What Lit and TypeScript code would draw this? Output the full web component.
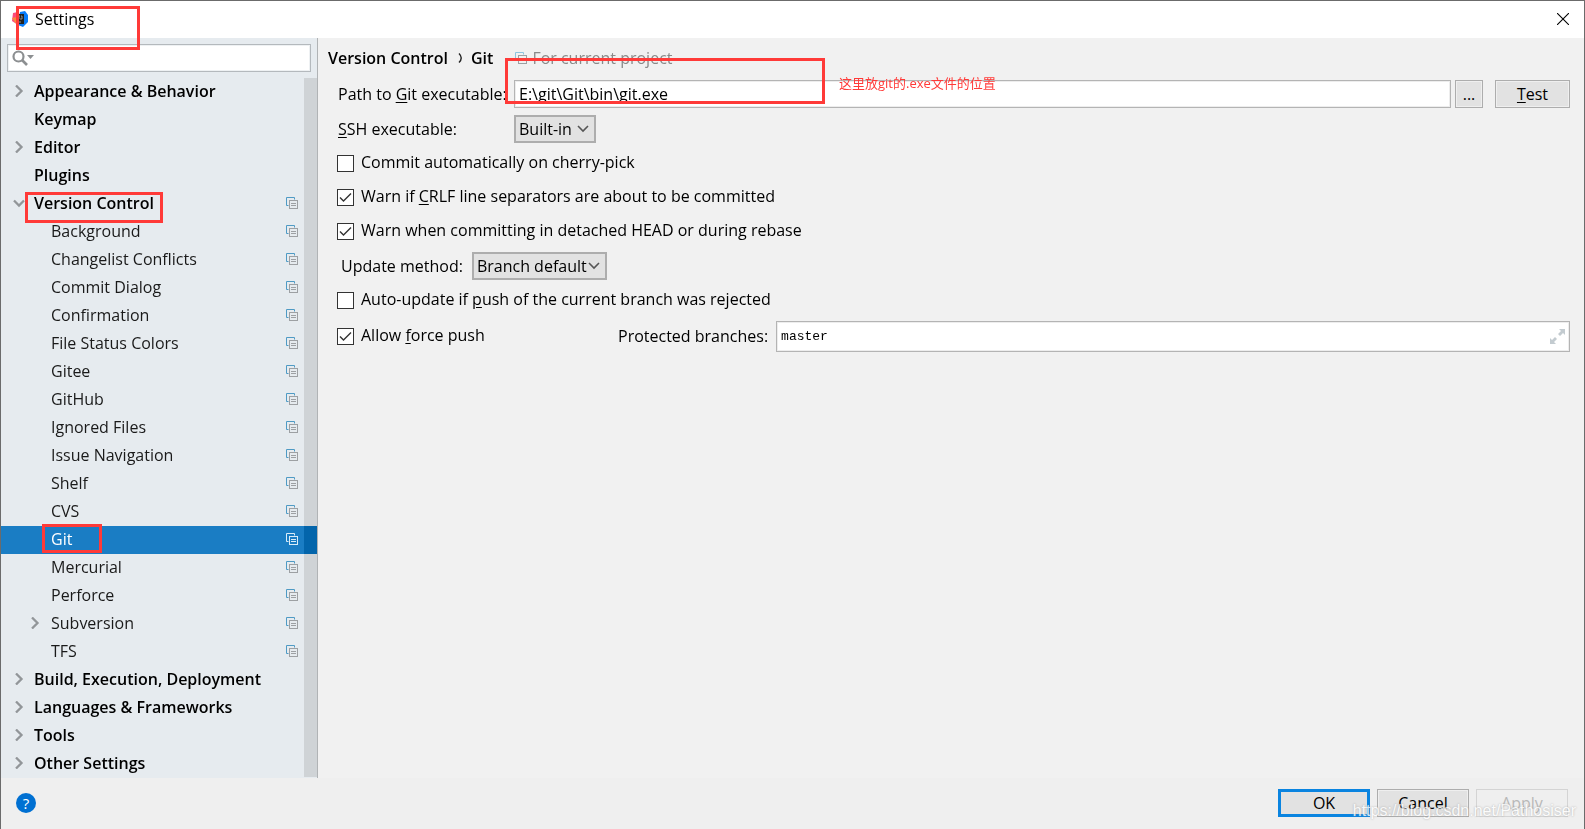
import { LitElement, html, css, nothing } from "lit";
import { customElement, property, state } from "lit/decorators.js";
import { classMap } from "lit/directives/class-map.js";

interface TreeItem {
  label: string;
  level: 0 | 1;
  arrow?: "closed" | "open";
  project?: boolean;
  marked?: boolean;
}

const ITEMS: TreeItem[] = [
  { label: "Appearance & Behavior", level: 0, arrow: "closed" },
  { label: "Keymap", level: 0 },
  { label: "Editor", level: 0, arrow: "closed" },
  { label: "Plugins", level: 0 },
  { label: "Version Control", level: 0, arrow: "open", project: true, marked: true },
  ...[
    "Background", "Changelist Conflicts", "Commit Dialog", "Confirmation",
    "File Status Colors", "Gitee", "GitHub", "Ignored Files",
    "Issue Navigation", "Shelf", "CVS",
  ].map((label): TreeItem => ({ label, level: 1, project: true })),
  { label: "Git", level: 1, project: true, marked: true },
  { label: "Mercurial", level: 1, project: true },
  { label: "Perforce", level: 1, project: true },
  { label: "Subversion", level: 1, arrow: "closed", project: true },
  { label: "TFS", level: 1, project: true },
  { label: "Build, Execution, Deployment", level: 0, arrow: "closed" },
  { label: "Languages & Frameworks", level: 0, arrow: "closed" },
  { label: "Tools", level: 0, arrow: "closed" },
  { label: "Other Settings", level: 0, arrow: "closed" },
];

const pagesIcon = html`<svg class="pages" width="12" height="12" viewBox="0 0 12 12" aria-hidden="true">
  <path class="back" d="M2.500 8.500H.5V.5h8v2" fill="none" />
  <rect class="front" x="3.500" y="3.500" width="8" height="8" fill="none" />
  <path class="front" d="M5 6.500h5M5 8.500h5" fill="none" />
</svg>`;

const downIcon = html`<svg class="down" width="12" height="8" viewBox="0 0 12 8" aria-hidden="true">
  <path d="M1 1l5 5 5-5" fill="none" stroke="#555" stroke-width="1.6" />
</svg>`;

const iconStyles = css`
  .pages { display: block; flex: none; }
  .back { stroke: #4f9ac4; }
  .front { stroke: #9da0a3; }
`;

@customElement("settings-tree")
export class SettingsTree extends LitElement {
  @state() private selected = "Git";

  static styles = [iconStyles, css`
    :host { display: block; position: relative; }
    ul { list-style: none; margin: 0; padding: 0; }
    .row {
      box-sizing: border-box;
      display: grid;
      grid-template-columns: 33px 1fr 12px;
      align-items: center;
      width: 100%;
      height: 28px;
      padding: 0 19px 2px 0;
      border: 0;
      background: none;
      color: #1a1a1a;
      font: inherit;
      text-align: left;
    }
    .row.child { grid-template-columns: 50px 1fr 12px; }
    .row.top { font-weight: 600; color: #000; }
    .row.selected { background: #1a7dc4; color: #fff; }
    .row.selected .back, .row.selected .front { stroke: #d9ecf8; }
    .arrow { display: block; justify-self: end; margin-right: 9px; }
    .child .arrow { margin-right: 10px; }
    .name { grid-column: 2; justify-self: start; position: relative; line-height: 26px; }
    .mark {
      position: absolute;
      inset: 2px -9px -7px -9px;
      border: 3px solid #ff3a38;
      pointer-events: none;
      z-index: 1;
    }
    .child .mark { inset: -2px -30px -1px -9px; }
    .scrollbar {
      position: absolute;
      inset: 0 0 1px auto;
      width: 13px;
      background: #171819;
      mix-blend-mode: difference;
    }
  `];

  private renderArrow(kind: TreeItem["arrow"]) {
    if (!kind) return nothing;
    const d = kind === "open" ? "M1 3.5l5 5 5-5" : "M3 .5l5.500 5.500-5.500 5.500";
    return html`<svg class="arrow" width="12" height="12" viewBox="0 0 12 12" aria-hidden="true">
      <path d=${d} fill="none" stroke="#929699" stroke-width="2.3" />
    </svg>`;
  }

  render() {
    return html`
      <ul>
        ${ITEMS.map((item) => html`<li>
          <button
            class=${classMap({
              row: true,
              top: item.level === 0,
              child: item.level === 1,
              selected: item.label === this.selected,
            })}
            @click=${() => (this.selected = item.label)}
          >
            ${this.renderArrow(item.arrow)}
            <span class="name">${item.label}${item.marked ? html`<span class="mark"></span>` : nothing}</span>
            ${item.project ? pagesIcon : nothing}
          </button>
        </li>`)}
      </ul>
      <div class="scrollbar"></div>
    `;
  }
}

@customElement("git-panel")
export class GitPanel extends LitElement {
  static styles = [iconStyles, css`
    :host { display: block; padding: 0 14px 0 10px; }
    .crumbs { box-sizing: border-box; display: flex; align-items: center; height: 42px; padding-bottom: 2px; font-weight: 600; }
    .crumbs svg { flex: none; }
    .sep { margin: 0 8px 0 10px; }
    .scope { display: flex; align-items: center; gap: 5px; margin-left: 22px; color: #8a8a8a; font-weight: 400; }
    .scope .back { stroke: #8cc4e0; }
    .grid {
      display: grid;
      grid-template-columns: 176px 1fr;
      row-gap: 7px;
      padding-left: 10px;
    }
    .grid > label { line-height: 28px; white-space: nowrap; }
    .path { position: relative; display: flex; }
    u { text-decoration-thickness: 1px; text-underline-offset: 2px; }
    input[type="text"] {
      box-sizing: border-box;
      flex: 1;
      min-width: 0;
      height: 28px;
      padding: 0 4px;
      border: 1px solid #b4b4b4;
      border-radius: 0;
      box-shadow: inset 0 0 0 1px #ededed;
      background: #fff;
      color: #000;
      font: inherit;
    }
    button {
      height: 28px;
      padding: 0;
      border: 1px solid #adadad;
      box-shadow: inset 0 0 0 1px #efefef;
      background: #e2e2e2;
      color: #000;
      font: inherit;
    }
    .browse { width: 28px; margin-left: 4px; }
    .test { width: 75px; margin-left: 12px; }
    .select { position: relative; display: inline-flex; }
    select {
      appearance: none;
      box-sizing: border-box;
      height: 28px;
      padding: 0 18px 0 3px;
      border: 2px solid #adadad;
      border-radius: 0;
      background: #e2e2e2;
      color: #000;
      font: inherit;
    }
    .ssh { width: 82px; }
    .method { width: 135px; }
    .down { position: absolute; right: 7px; top: 10px; pointer-events: none; }
    .options { padding: 3px 0 0 9px; }
    .check { display: flex; align-items: center; gap: 7px; height: 34px; }
    .check label { padding-bottom: 2px; white-space: nowrap; }
    input[type="checkbox"] {
      appearance: none;
      box-sizing: border-box;
      flex: none;
      width: 17px;
      height: 17px;
      margin: 0;
      border: 1px solid #333;
      background: #fff;
    }
    input[type="checkbox"]:checked {
      background: #fff url("data:image/svg+xml,%3Csvg xmlns='http://www.w3.org/2000/svg' width='15' height='15'%3E%3Cpath d='M2 7.5l3.5 3.5L13 3.5' fill='none' stroke='%23333' stroke-width='1.4'/%3E%3C/svg%3E");
    }
    .update { display: flex; align-items: center; gap: 9px; height: 35px; padding-left: 4px; }
    .push { display: flex; align-items: center; padding-top: 2px; }
    .push .check { width: 281px; }
    .branches { display: flex; flex: 1; position: relative; margin-left: 8px; }
    .branches input[type="text"] { height: 31px; font-family: "Liberation Mono", monospace; font-size: 13px; padding-right: 26px; }
    .expand { position: absolute; right: 5px; top: 8px; }
    .box { position: absolute; left: -9px; top: -22px; width: 314px; height: 40px; border: 3px solid #ff3a38; pointer-events: none; }
    .note { position: absolute; left: 325px; top: -7px; color: #ff3a38; font: 13px/20px "Open Sans", "Noto Sans CJK SC", sans-serif; white-space: nowrap; pointer-events: none; }
  `];

  private check(id: string, label: unknown, checked: boolean) {
    return html`<div class="check">
      <input type="checkbox" id=${id} .checked=${checked} /><label for=${id}>${label}</label>
    </div>`;
  }

  render() {
    return html`
      <div class="crumbs">
        <span>Version Control</span>
        <svg class="sep" width="5" height="10" viewBox="0 0 5 10" aria-hidden="true">
          <path d="M1 .5c3 3 3 6 0 9" fill="none" stroke="#222" stroke-width="1.4" />
        </svg>
        <span>Git</span>
        <span class="scope">${pagesIcon}<span>For current project</span></span>
      </div>
      <div class="grid">
        <label for="path">Path to <u>G</u>it executable:</label>
        <div class="path">
          <input type="text" id="path" .value=${"E:\\git\\Git\\bin\\git.exe"} />
          <button class="browse">...</button>
          <button class="test"><u>T</u>est</button>
          <span class="box"></span>
          <span class="note">这里放git的.exe文件的位置</span>
        </div>
        <label for="ssh"><u>S</u>SH executable:</label>
        <div><span class="select"><select class="ssh" id="ssh"><option>Built-in</option></select>${downIcon}</span></div>
      </div>
      <div class="options">
        ${this.check("cherry", "Commit automatically on cherry-pick", false)}
        ${this.check("crlf", html`Warn if <u>C</u>RLF line separators are about to be committed`, true)}
        ${this.check("detached", "Warn when committing in detached HEAD or during rebase", true)}
        <div class="update">
          <label for="method">Update method:</label>
          <span class="select"><select class="method" id="method"><option>Branch default</option></select>${downIcon}</span>
        </div>
        ${this.check("auto", html`Auto-update if <u>p</u>ush of the current branch was rejected`, false)}
        <div class="push">
          ${this.check("force", html`Allow <u>f</u>orce push`, true)}
          <label for="protected">Protected branches:</label>
          <div class="branches">
            <input type="text" id="protected" .value=${"master"} />
            <svg class="expand" width="15" height="15" viewBox="0 0 15 15" aria-hidden="true">
              <path d="M9 0h6v6l-2-2-3 3-2-2 3-3zM0 9l2 2 3-3 2 2-3 3 2 2H0z" fill="#c3cbd0" />
            </svg>
          </div>
        </div>
      </div>
    `;
  }
}

@customElement("app-root")
export class AppRoot extends LitElement {
  @property() heading = "Settings";

  static styles = css`
    :host {
      box-sizing: border-box;
      display: flex;
      flex-direction: column;
      min-height: 100vh;
      border: 1px solid #6b6b6b;
      background: #f1f1f1;
      color: #000;
      font: 16px/22px "Open Sans", "Noto Sans CJK SC", sans-serif;
    }
    header { box-sizing: border-box; display: flex; align-items: center; height: 37px; padding: 0 15px 1px 11px; background: #fff; }
    .brand { position: relative; display: flex; align-items: center; gap: 7px; flex: 1; }
    .box { position: absolute; left: 4px; top: -2px; width: 118px; height: 38px; border: 3px solid #ff3a38; pointer-events: none; z-index: 2; }
    .close { display: flex; padding: 0; border: 0; background: none; }
    main { display: flex; flex: 1; }
    aside { box-sizing: border-box; width: 317px; flex: none; border-right: 1px solid #b0b3b5; background: #e6ebef; }
    .search { position: relative; margin: 6px 6px 6px; display: flex; }
    .search input { box-sizing: border-box; width: 100%; height: 28px; border: 1px solid #b4b9bd; box-shadow: inset 0 0 0 1px #eef1f3; padding: 0 8px 0 32px; font: inherit; background: #fff; }
    .search svg { position: absolute; left: 5px; top: 6px; }
    git-panel { flex: 1; min-width: 0; }
    footer { box-sizing: border-box; display: flex; align-items: center; height: 51px; padding: 0 16px 2px 15px; background: #efefef; gap: 7px; position: relative; }
    .help { width: 20px; height: 20px; padding: 0; border: 0; border-radius: 50%; background: #0070d2; color: #fff; font: 15px/20px "Open Sans", sans-serif; margin-right: auto; }
    .action { box-sizing: border-box; width: 92px; height: 28px; padding: 0; border: 1px solid #adadad; box-shadow: inset 0 0 0 1px #efefef; background: #e2e2e2; color: #000; font: inherit; }
    .primary { border: 3px solid #0a84e0; box-shadow: none; }
    .action:disabled { border-color: #d4d4d4; background: #efefef; color: #b8b8b8; }
    .watermark { position: absolute; right: 8px; bottom: 8px; color: #fff; font: 16px/20px "Liberation Sans", sans-serif; text-shadow: 0 0 2px #999; opacity: 0.8; pointer-events: none; }
  `;

  render() {
    return html`
      <header>
        <div class="brand">
          <svg width="16" height="16" viewBox="0 0 16 16" aria-hidden="true">
            <path d="M1 2l5-1 3 4-3 9-6-4z" fill="#fc4c7c" />
            <path d="M0 7l5-1v8z" fill="#f98b3c" />
            <path d="M8 1l5-1 3 4v7l-5 5-5-2z" fill="#087cfa" />
            <rect x="4" y="3" width="8" height="10" fill="#222" />
            <path d="M6 5h2M7 5v3M9 5h1v3H8M6 11h3" stroke="#aaa" stroke-width="0.8" fill="none" />
          </svg>
          <span>${this.heading}</span>
          <span class="box"></span>
        </div>
        <button class="close" aria-label="Close">
          <svg width="12" height="12" viewBox="0 0 12 12"><path d="M0 0l12 12M12 0L0 12" stroke="#000" stroke-width="1.1" /></svg>
        </button>
      </header>
      <main>
        <aside>
          <div class="search">
            <input type="text" aria-label="Search settings" />
            <svg width="24" height="16" viewBox="0 0 24 16" aria-hidden="true">
              <circle cx="6.500" cy="6.500" r="5" fill="none" stroke="#8c8f91" stroke-width="2.2" />
              <path d="M10 10l5 5" stroke="#8c8f91" stroke-width="2.6" />
              <path d="M15 5h7l-3.500 4z" fill="#8c8f91" />
            </svg>
          </div>
          <settings-tree></settings-tree>
        </aside>
        <git-panel></git-panel>
      </main>
      <footer>
        <button class="help" aria-label="Help">?</button>
        <button class="action primary">OK</button>
        <button class="action">Cancel</button>
        <button class="action" disabled>Apply</button>
        <span class="watermark">https://blog.csdn.net/Pathosiser</span>
      </footer>
    `;
  }
}
